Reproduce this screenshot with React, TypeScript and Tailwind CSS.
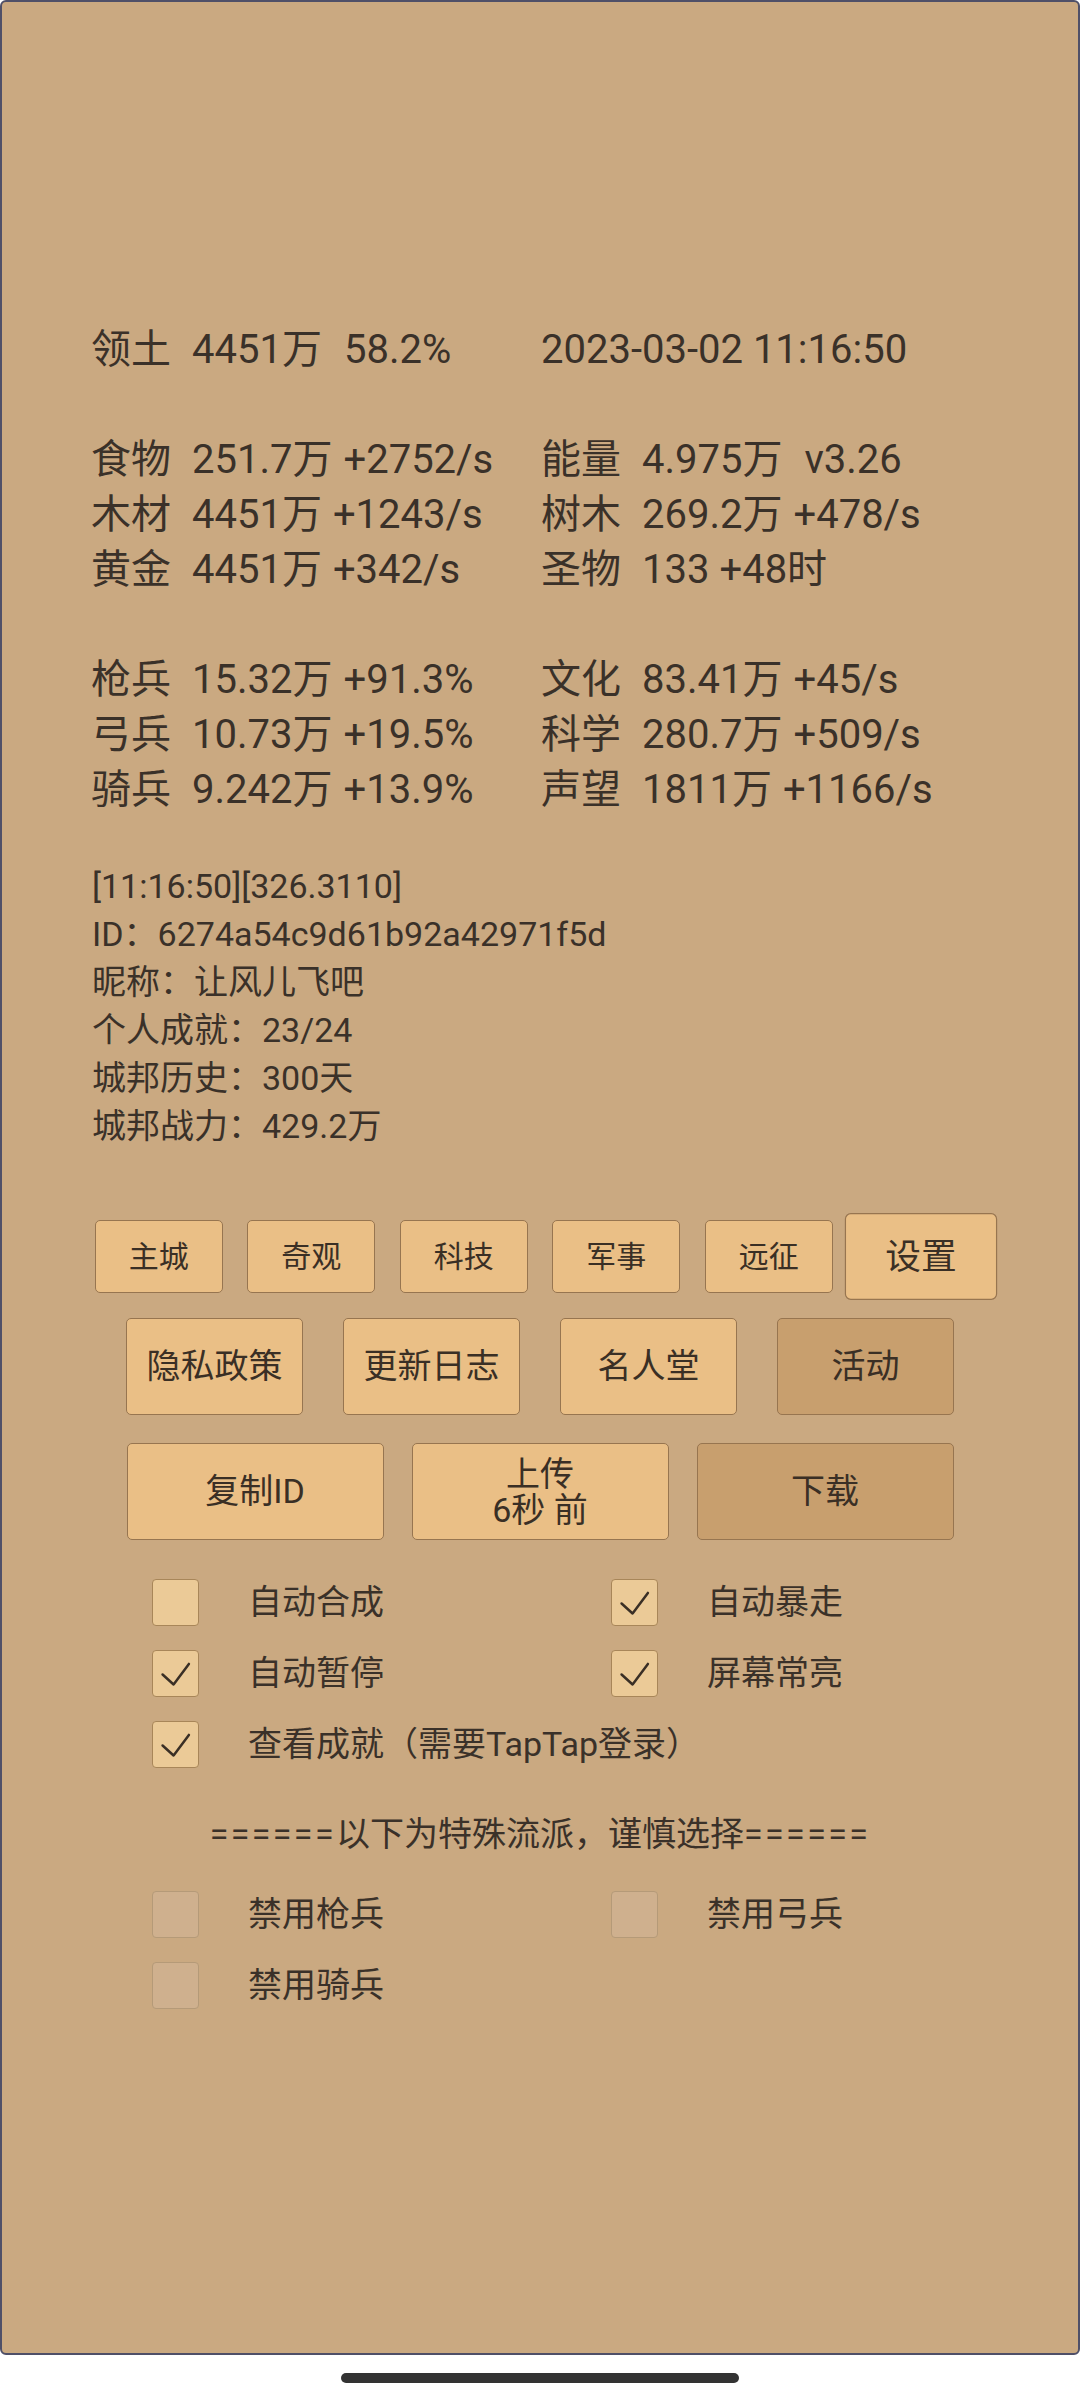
import React from "react";

type Stat = { label: string; value: string; rate?: string; gap?: string };

const font = "font-['Roboto','Noto_Sans_CJK_SC',sans-serif]";

const statRows: (Stat[] | null)[] = [
  [
    { label: "领土", value: "4451万", rate: "58.2%", gap: "ml-[22px]" },
    { label: "", value: "2023-03-02 11:16:50" },
  ],
  null,
  [
    { label: "食物", value: "251.7万", rate: "+2752/s" },
    { label: "能量", value: "4.975万", rate: "v3.26", gap: "ml-[22px]" },
  ],
  [
    { label: "木材", value: "4451万", rate: "+1243/s" },
    { label: "树木", value: "269.2万", rate: "+478/s" },
  ],
  [
    { label: "黄金", value: "4451万", rate: "+342/s" },
    { label: "圣物", value: "133", rate: "+48时", gap: "ml-[10px]" },
  ],
  null,
  [
    { label: "枪兵", value: "15.32万", rate: "+91.3%" },
    { label: "文化", value: "83.41万", rate: "+45/s" },
  ],
  [
    { label: "弓兵", value: "10.73万", rate: "+19.5%" },
    { label: "科学", value: "280.7万", rate: "+509/s" },
  ],
  [
    { label: "骑兵", value: "9.242万", rate: "+13.9%" },
    { label: "声望", value: "1811万", rate: "+1166/s" },
  ],
];

const infoLines = [
  "[11:16:50][326.3110]",
  "ID：6274a54c9d61b92a42971f5d",
  "昵称：让风儿飞吧",
  "个人成就：23/24",
  "城邦历史：300天",
  "城邦战力：429.2万",
];

function StatCell({ s }: { s: Stat }) {
  return (
    <div className="flex items-center whitespace-pre">
      {s.label && <span className="mr-[21px]">{s.label}</span>}
      <span>{s.value}</span>
      {s.rate && <span className={s.gap ?? "ml-[11px]"}>{s.rate}</span>}
    </div>
  );
}

function Btn({
  children,
  className,
  dark,
}: {
  children: React.ReactNode;
  className: string;
  dark?: boolean;
}) {
  return (
    <button
      type="button"
      className={`flex shrink-0 flex-col items-center justify-center rounded-[5px] border border-[#977550] text-[#3a2f25] ${
        dark ? "bg-[#c89f6e]" : "bg-[#eabf86]"
      } ${className}`}
    >
      {children}
    </button>
  );
}

function Check({ checked, disabled }: { checked?: boolean; disabled?: boolean }) {
  return (
    <div
      className={`flex h-[47px] w-[47px] shrink-0 items-center justify-center rounded-[4px] border ${
        disabled
          ? "border-[#b59a78] bg-[#cfb08e]"
          : "border-[#a88659] bg-[#ebca97]"
      }`}
    >
      {checked && (
        <svg width="47" height="47" viewBox="0 0 47 47" fill="none">
          <path
            d="M10 24.5 L21.5 35 L37.5 13.5"
            stroke="#3a2f25"
            strokeWidth="2.6"
            strokeLinecap="round"
            strokeLinejoin="round"
          />
        </svg>
      )}
    </div>
  );
}

function Option({
  label,
  checked,
  disabled,
}: {
  label: string;
  checked?: boolean;
  disabled?: boolean;
}) {
  return (
    <div className="flex items-center gap-[49px]">
      <Check checked={checked} disabled={disabled} />
      <span className="whitespace-nowrap">{label}</span>
    </div>
  );
}

export default function App() {
  return (
    <div className={`flex h-[2400px] w-[1080px] flex-col bg-white ${font}`}>
      <div className="flex h-[2355px] flex-col rounded-[6px] border-2 border-[#4f5068] bg-[#caa981] text-[#3a3129]">
        {/* stats */}
        <div className="grid grid-cols-[450px_1fr] pl-[89px] pt-[320px] text-[40px] leading-[55px]">
          {statRows.map((row, i) =>
            row ? (
              <React.Fragment key={i}>
                <StatCell s={row[0]} />
                <StatCell s={row[1]} />
              </React.Fragment>
            ) : (
              <div key={i} className="col-span-2 h-[55px]" />
            )
          )}
        </div>

        {/* info */}
        <div className="mt-[45px] pl-[90px] text-[34px] leading-[48px]">
          {infoLines.map((l) => (
            <div key={l}>{l}</div>
          ))}
        </div>

        {/* buttons */}
        <div className="mt-[70px] flex justify-center gap-[24.5px] text-[30px]">
          {["主城", "奇观", "科技", "军事", "远征"].map((t) => (
            <Btn key={t} className="h-[73px] w-[128px]">
              {t}
            </Btn>
          ))}
          <Btn className="h-[73px] w-[128px] scale-[1.19]">设置</Btn>
        </div>

        <div className="mt-[25px] flex justify-center gap-[40px] text-[34px]">
          <Btn className="h-[97px] w-[177px]">隐私政策</Btn>
          <Btn className="h-[97px] w-[177px]">更新日志</Btn>
          <Btn className="h-[97px] w-[177px]">名人堂</Btn>
          <Btn className="h-[97px] w-[177px]" dark>
            活动
          </Btn>
        </div>

        <div className="mt-[28px] flex justify-center gap-[28px] text-[34px]">
          <Btn className="h-[97px] w-[257px]">复制ID</Btn>
          <Btn className="h-[97px] w-[257px] leading-[36px]">
            <span>上传</span>
            <span className="whitespace-pre">6秒 前</span>
          </Btn>
          <Btn className="h-[97px] w-[257px]" dark>
            下载
          </Btn>
        </div>

        {/* options */}
        <div className="mt-[38px] grid grid-cols-[459px_1fr] gap-y-[23px] pl-[150px] text-[34px] leading-[48px]">
          <Option label="自动合成" />
          <Option label="自动暴走" checked />
          <Option label="自动暂停" checked />
          <Option label="屏幕常亮" checked />
          <div className="col-span-2">
            <Option label="查看成就（需要TapTap登录）" checked />
          </div>
        </div>

        <div className="mt-[42px] flex justify-center text-[34px] leading-[48px]">
          <span className="tracking-[2.4px]">======</span>
          <span>以下为特殊流派，谨慎选择</span>
          <span className="tracking-[2.4px]">======</span>
        </div>

        <div className="mt-[32px] grid grid-cols-[459px_1fr] gap-y-[23px] pl-[150px] text-[34px] leading-[48px]">
          <Option label="禁用枪兵" disabled />
          <Option label="禁用弓兵" disabled />
          <Option label="禁用骑兵" disabled />
        </div>
      </div>

      <div className="flex flex-1 items-center justify-center">
        <div className="h-[10px] w-[398px] rounded-full bg-[#333333]" />
      </div>
    </div>
  );
}
